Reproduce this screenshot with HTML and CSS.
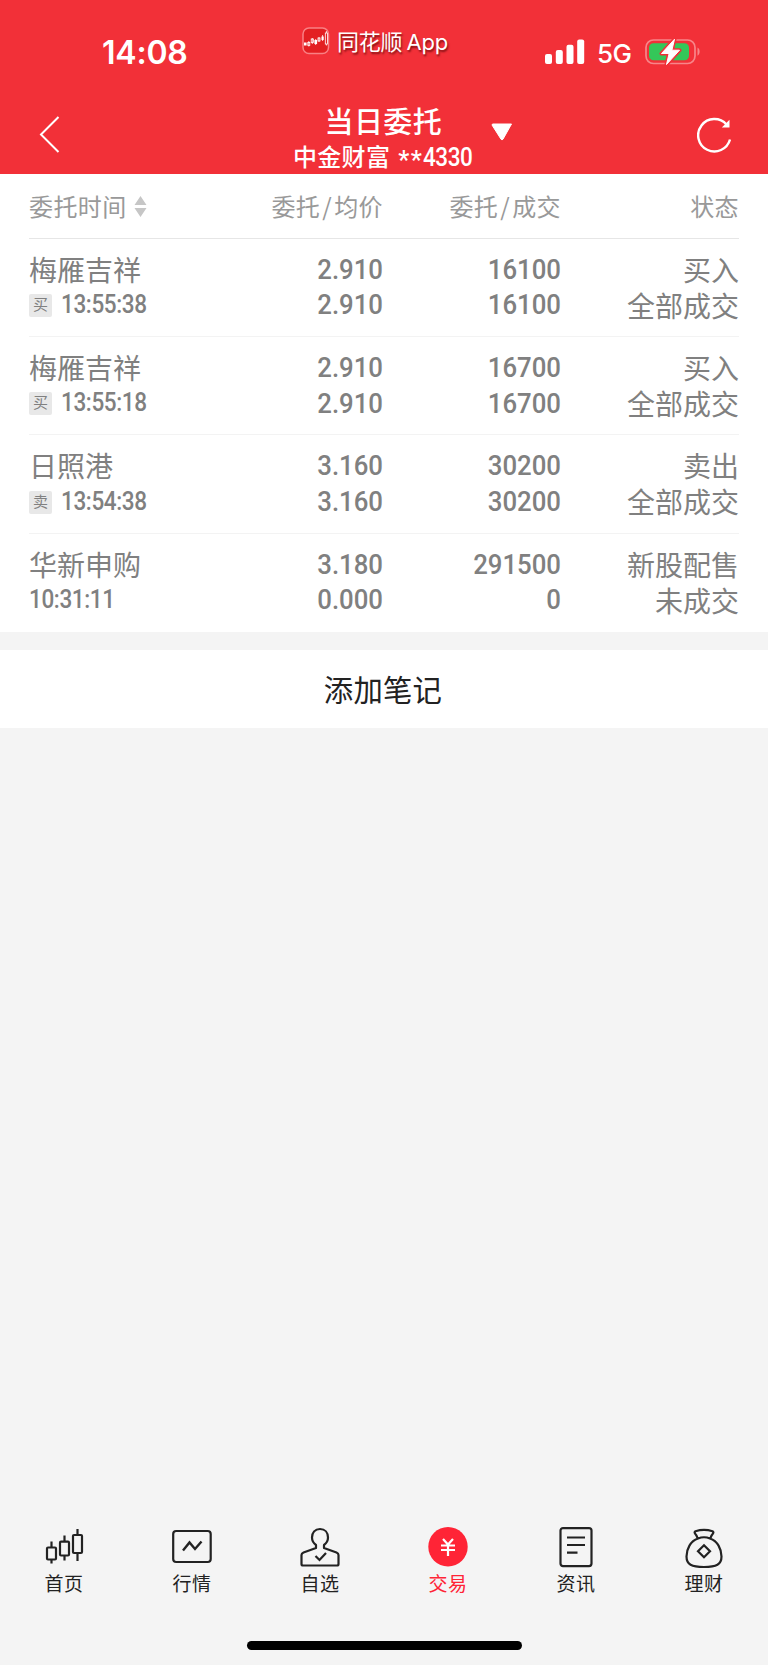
FILE: index.html
```html
<!DOCTYPE html>
<html lang="zh-CN">
<head>
<meta charset="utf-8">
<title>当日委托</title>
<link rel="stylesheet" href="styles.css">
</head>
<body>
<header class="header">
  <div class="status">
    <div class="clock">14:08</div>
    <div class="brand">
      <svg class="brand-logo" width="28" height="28" viewBox="0 0 28 28">
        <rect x="1" y="1" width="25.5" height="25.5" rx="6" fill="#e31f22" stroke="#f98084" stroke-width="1.5"/>
        <g stroke="#fff" stroke-width=".8" fill="none">
          <rect x="5.8" y="15.5" width="2" height="3"/><path d="M6.8 14v5.5M10.3 11v6"/><rect x="9.2" y="12" width="2.2" height="3.5"/>
          <rect x="16" y="11" width="2" height="3"/><rect x="23.3" y="6" width="2.200" height="11"/><path d="M24.4 4v2M24.4 17v1.500M13.7 12v6M17 10v5M20.6 8v6"/>
        </g>
        <path fill="#fff" d="M2 15.5h2.6v3H2zM12.4 13h2.7v4h-2.7zM19.5 9.500h2.200v3.500h-2.200z"/>
      </svg>
      <span class="brand-name">同花顺<span class="brand-app">App</span></span>
    </div>
    <div class="system">
      <svg width="40" height="26" viewBox="0 0 40 26" fill="#fff"><rect x="0" y="15" width="7" height="10" rx="2"/><rect x="10.800" y="11" width="7" height="14" rx="2"/><rect x="21.500" y="5.700" width="7" height="19.300" rx="2"/><rect x="32.200" y="0.500" width="7" height="24.500" rx="2"/></svg>
      <span class="network">5G</span>
      <svg class="battery" width="56" height="28" viewBox="0 0 56 28">
        <rect x="1" y="2" width="49" height="23.500" rx="7.500" fill="none" stroke="#f88589" stroke-width="1.700"/>
        <path d="M52.500 9.500c2.800 1.200 2.800 7 0 8.200z" fill="#f88589"/>
        <rect x="4" y="5.300" width="40" height="17" rx="4.500" fill="#34c759"/>
        <path d="M29.500 1.200L16.500 15.500h7.600L21.500 26.500 34.500 12.200h-7.600z" fill="#fff" stroke="#f23038" stroke-width="4" stroke-linejoin="round"/>
        <path d="M29.500 1.200L16.500 15.500h7.600L21.500 26.500 34.500 12.200h-7.600z" fill="#fff" stroke="#fff" stroke-width="1" stroke-linejoin="round"/>
      </svg>
    </div>
  </div>
  <div class="nav">
    <svg class="back" width="22" height="38" viewBox="0 0 22 38" fill="none" stroke="#fff" stroke-width="2"><path d="M19.500 2L2 19.500 19.500 37"/></svg>
    <div class="titles">
      <div class="title">当日委托</div>
      <div class="account">中金财富<span class="stars">**</span><span class="digits">4330</span></div>
    </div>
    <svg class="caret" width="22" height="18" viewBox="0 0 22 18"><path d="M1.500 1h19L12 16.200q-1 1.400-2 0L1 2z" fill="#fff" stroke="#fff" stroke-linejoin="round"/></svg>
    <svg class="refresh" width="36" height="38" viewBox="0 0 36 38" fill="none" stroke="#fff" stroke-width="2.400"><path d="M33 23.500A16.200 16.200 0 1 1 29.500 8.500"/><path d="M32.500 3.800v7.700h-7.700z" fill="#fff" stroke="none"/></svg>
  </div>
</header>
<main class="orders">
  <div class="row head">
    <div class="first">委托时间<svg class="sort" width="13" height="23" viewBox="0 0 13 23" fill="#c6c6c6"><path d="M6.500 1l6 9H.5zM6.500 22l6-9H.5z"/></svg></div>
    <div>委托<i>/</i>均价</div><div>委托<i>/</i>成交</div><div>状态</div>
  </div>
  <div class="row order">
    <div class="first"><p class="name">梅雁吉祥</p><p class="time"><b class="tag">买</b><span>13:55:38</span></p></div>
    <div class="num"><p>2.910</p><p>2.910</p></div><div class="num"><p>16100</p><p>16100</p></div>
    <div class="state"><p>买入</p><p>全部成交</p></div>
  </div>
  <div class="row order">
    <div class="first"><p class="name">梅雁吉祥</p><p class="time"><b class="tag">买</b><span>13:55:18</span></p></div>
    <div class="num"><p>2.910</p><p>2.910</p></div><div class="num"><p>16700</p><p>16700</p></div>
    <div class="state"><p>买入</p><p>全部成交</p></div>
  </div>
  <div class="row order">
    <div class="first"><p class="name">日照港</p><p class="time"><b class="tag">卖</b><span>13:54:38</span></p></div>
    <div class="num"><p>3.160</p><p>3.160</p></div><div class="num"><p>30200</p><p>30200</p></div>
    <div class="state"><p>卖出</p><p>全部成交</p></div>
  </div>
  <div class="row order">
    <div class="first"><p class="name">华新申购</p><p class="time"><span>10:31:11</span></p></div>
    <div class="num"><p>3.180</p><p>0.000</p></div><div class="num"><p>291500</p><p>0</p></div>
    <div class="state"><p>新股配售</p><p>未成交</p></div>
  </div>
</main>
<button class="note">添加笔记</button>
<nav class="tabs">
  <a class="tab"><svg width="42" height="42" viewBox="0 0 42 42" fill="none" stroke="#222" stroke-width="2.200"><rect x="4" y="20.500" width="9" height="12" rx="1"/><path d="M8.500 14.500V20.500M8.500 32.500v4M21.500 8.500v6M21.500 28.500v5M34.500 2v6M34.500 26v8"/><rect x="17" y="14.700" width="9" height="13.800" rx="1"/><rect x="30" y="8" width="9" height="18" rx="1"/></svg>首页</a>
  <a class="tab"><svg width="42" height="42" viewBox="0 0 42 42" fill="none" stroke="#222" stroke-width="2.200"><rect x="2.200" y="4" width="37.500" height="31" rx="3"/><path d="M12 23.500l6.500-8 5.500 6.500 6.500-7.500" stroke-width="2.400"/></svg>行情</a>
  <a class="tab"><svg width="42" height="42" viewBox="0 0 42 42" fill="none" stroke="#222" stroke-width="2.200"><path d="M17 18C14.300 16 13 13.500 13 10.500c0-5 3-8.500 8-8.500s8 3.500 8 8.500c0 3-1.300 5.500-4 7.500v3l12.500 4.500q2 .8 2 2.500v9q0 1.500-1.500 1.500H4q-1.500 0-1.500-1.500v-9q0-1.700 2-2.500L17 21z" stroke-linejoin="round"/><path d="M16.500 29l4 4 6.500-7" stroke-width="2.200"/></svg>自选</a>
  <a class="tab active"><svg width="42" height="42" viewBox="0 0 42 42" fill="none"><circle cx="21" cy="19.800" r="19.700" fill="#ff2436"/><path d="M16 12L21 17.500l5-5.500M14 18.500H28M14 23H28M21 17v12" stroke="#fff" stroke-width="2.200"/></svg>交易</a>
  <a class="tab"><svg width="42" height="42" viewBox="0 0 42 42" fill="none" stroke="#222" stroke-width="2.200"><rect x="5.500" y="1.100" width="31" height="38" rx="2.500"/><path d="M12 10.500h18M12 18h18M12 25.700h10.500"/></svg>资讯</a>
  <a class="tab"><svg width="42" height="42" viewBox="0 0 42 42" fill="none" stroke="#222" stroke-width="2.200"><path d="M15 11.500C7.500 14 3.500 22 3.500 29.500c0 8 5 10.500 17.500 10.500S38.500 37.500 38.500 29.500c0-7.500-4-15.500-11.500-18q-6-2.500-12 0zM14.500 11q-1-3-2.500-4.500-1-1.500.5-2.300Q21 1.700 29.500 4.200q1.500.8.5 2.300-1.500 1.500-2.500 4.500"/><path d="M21 18.300l6 6-6 6-6-6z"/></svg>理财</a>
</nav>
<div class="home-bar"></div>
</body>
</html>
```

FILE: styles.css
```css
* { box-sizing: border-box; }
body { margin: 0; width: 768px; height: 1665px; overflow: hidden; display: flex; flex-direction: column; background: #f4f4f4; color: #222; font-family: Roboto, "Noto Sans CJK SC", sans-serif; }
p { margin: 0; }
svg { display: block; flex: none; }
.header { height: 174.400px; background: #f23038; color: #fff; flex: none; }
.status { height: 100px; display: flex; align-items: flex-start; }
.clock { width: 202px; padding-left: 102px; padding-top: 33px; font: 600 32px/40px Inter, sans-serif; margin-right: 100px; letter-spacing: -.2px; }
.brand { width: 243px; padding-top: 26.500px; display: flex; gap: 7px; }
.brand-name { font: 22px/30px Inter, "Noto Sans CJK SC", sans-serif; letter-spacing: -.2px; text-shadow: 1px 2px 2px rgba(70,0,0,.65); white-space: nowrap; }
.brand-app { margin-left: 4px; }
.system { display: flex; padding-top: 39px; }
.network { font: 500 26px/30px Inter, sans-serif; margin: 0 0 0 12px; width: 48px; letter-spacing: -.5px; }
.battery { margin-top: -1px; }
.nav { height: 74px; display: flex; align-items: flex-start; }
.back { margin: 15px 232px 0 39px; }
.titles { width: 198px; }
.title { margin: 5px 0 0 31.500px; font-size: 29px; line-height: 37px; font-weight: 500; letter-spacing: .4px; }
.account { font-size: 24px; line-height: 32px; font-weight: 500; letter-spacing: .3px; display: flex; }
.stars { padding: 3px 0 0 8px; letter-spacing: 1.500px; width: 33px; font-size: 25px; }
.digits { font-size: 25px; letter-spacing: -.5px; transform: scaleX(.9); transform-origin: left; }
.caret { margin-top: 23px; }
.refresh { margin: 16px 0 0 184px; }
.orders { background: #fff; flex: none; height: 457.300px; padding: 0 29px; }
.row { display: grid; grid-template-columns: 175px 179px 178px 178px; color: #808080; text-align: right; }
.row .first { text-align: left; }
.head { height: 64.300px; border-bottom: 1px solid #e6e6e6; font-family: "Noto Sans CJK SC", sans-serif; font-size: 24px; line-height: 64px; color: #999; letter-spacing: .4px; }
.head .first { display: flex; align-items: center; gap: 7px; }
.head i { font-style: normal; display: inline-block; width: 14px; text-align: center; }
.order { height: 98.300px; border-bottom: 1px solid #f3f3f3; }
.order:last-child { border: 0; }
.name, .state { font-size: 28px; line-height: 36px; }
.name { padding-top: 15px; height: 48px; }
.state { padding-top: 15px; }
.time { display: flex; align-items: center; height: 36px; font-size: 25px; font-weight: 500; letter-spacing: -.4px; }
.time span { transform: scaleX(.9); transform-origin: left; }
.tag { width: 23px; height: 23px; margin: 2px 9px 0 0; border-radius: 2px; background: #e8e8e8; font-size: 15px; font-weight: 400; line-height: 23px; text-align: center; letter-spacing: 0; }
.num { padding-top: 13px; font-size: 28px; line-height: 35.700px; font-weight: 500; transform: scaleX(.92); transform-origin: right; }
.note { flex: none; width: 100%; height: 78.500px; margin-top: 18px; padding: 0 2px 2px 0; border: 0; background: #fff; color: #222; font: 29.400px/76px "Noto Sans CJK SC", sans-serif; letter-spacing: .2px; }
.tabs { display: grid; grid-template-columns: repeat(6, 128px); margin-top: auto; height: 114px; flex: none; }
.tab { display: flex; flex-direction: column; align-items: center; font-size: 19px; line-height: 28px; letter-spacing: .4px; gap: 2px; }
.active { color: #ff2436; }
.home-bar { width: 275px; height: 9px; border-radius: 5px; background: #000; margin: 0 auto 15px; flex: none; }
```
